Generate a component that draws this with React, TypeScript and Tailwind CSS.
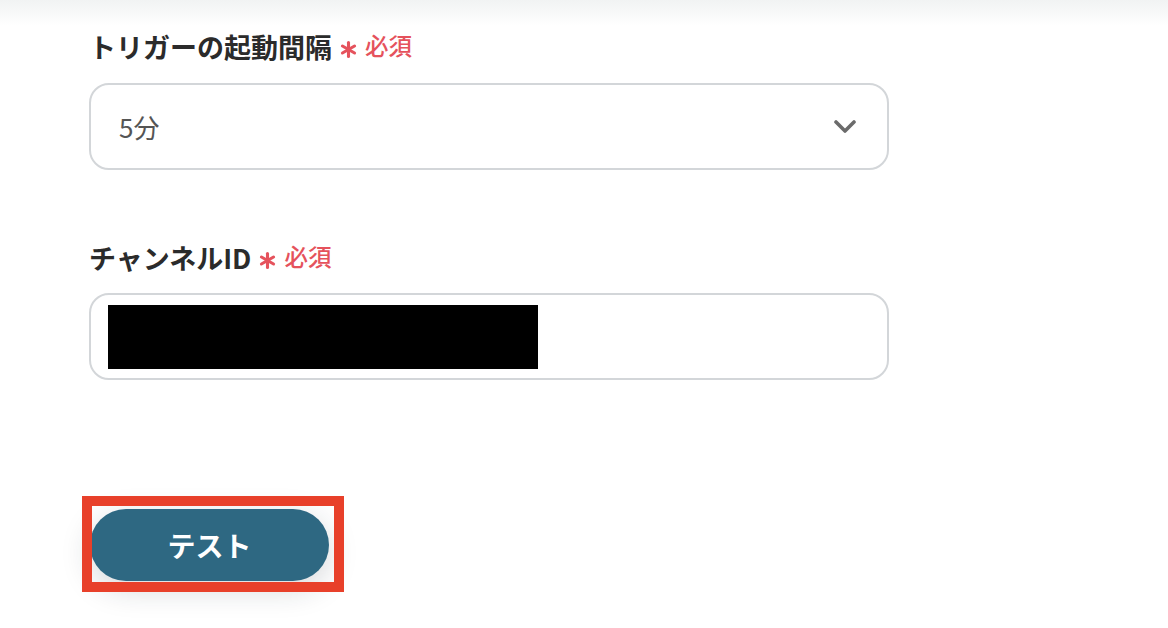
const FONT = { fontFamily: '"Noto Sans CJK JP", "Noto Sans", sans-serif' };

function Required() {
  return (
    <span className="flex items-center gap-[8px] ml-[8px]">
      <svg width="17" height="17" viewBox="0 0 16 16" className="mt-[6px]">
        <g stroke="#e5525c" strokeWidth="2.9" strokeLinecap="round">
          <line x1="8" y1="1.5" x2="8" y2="14.5" />
          <line x1="2.3" y1="4.7" x2="13.7" y2="11.3" />
          <line x1="2.3" y1="11.3" x2="13.7" y2="4.7" />
        </g>
      </svg>
      <span className="text-[23.5px] font-medium text-[#e5525c] leading-none">必須</span>
    </span>
  );
}

function Label({ text }: { text: string }) {
  return (
    <div className="flex items-center h-[36px]">
      <span className="text-[27px] font-bold text-[#2b2b2b] leading-none">{text}</span>
      <Required />
    </div>
  );
}

export default function App() {
  return (
    <div className="relative w-full h-[628px] bg-white overflow-hidden" style={FONT}>
      <div className="absolute top-0 inset-x-0 h-[26px] bg-gradient-to-b from-[#f1f3f3] to-white" />

      <div className="relative pl-[89px] pt-[28px]">
        <Label text="トリガーの起動間隔" />

        <div className="mt-[19px] w-[800px] h-[87px] border-2 border-[#d3d6d9] rounded-[20px] flex items-center justify-between pl-[28px] pr-[31px]">
          <span className="text-[26px] text-[#555555]">5分</span>
          <svg width="22" height="14" viewBox="0 0 22 14" fill="none">
            <path d="M2 2 L11 11 L20 2" stroke="#6b6b6b" strokeWidth="3.6" strokeLinecap="round" strokeLinejoin="round" />
          </svg>
        </div>

        <div className="mt-[69px]">
          <Label text="チャンネルID" />
        </div>

        <div className="mt-[18px] w-[800px] h-[87px] border-2 border-[#d3d6d9] rounded-[20px] flex items-center pl-[17px]">
          <div className="w-[430px] h-[64px] bg-black" />
        </div>

        <div className="relative mt-[116px] ml-[-7px] w-[262px] h-[96px]">
          <div className="absolute left-[8px] top-[13px] w-[239px] h-[72px] rounded-full bg-[#2e6882] shadow-[0_8px_30px_rgba(30,40,50,0.18)] flex items-center justify-center">
            <span className="text-[28px] font-bold text-white leading-none">テスト</span>
          </div>
          <div className="absolute inset-0 border-[10px] border-[#e8402a]" />
        </div>
      </div>
    </div>
  );
}
